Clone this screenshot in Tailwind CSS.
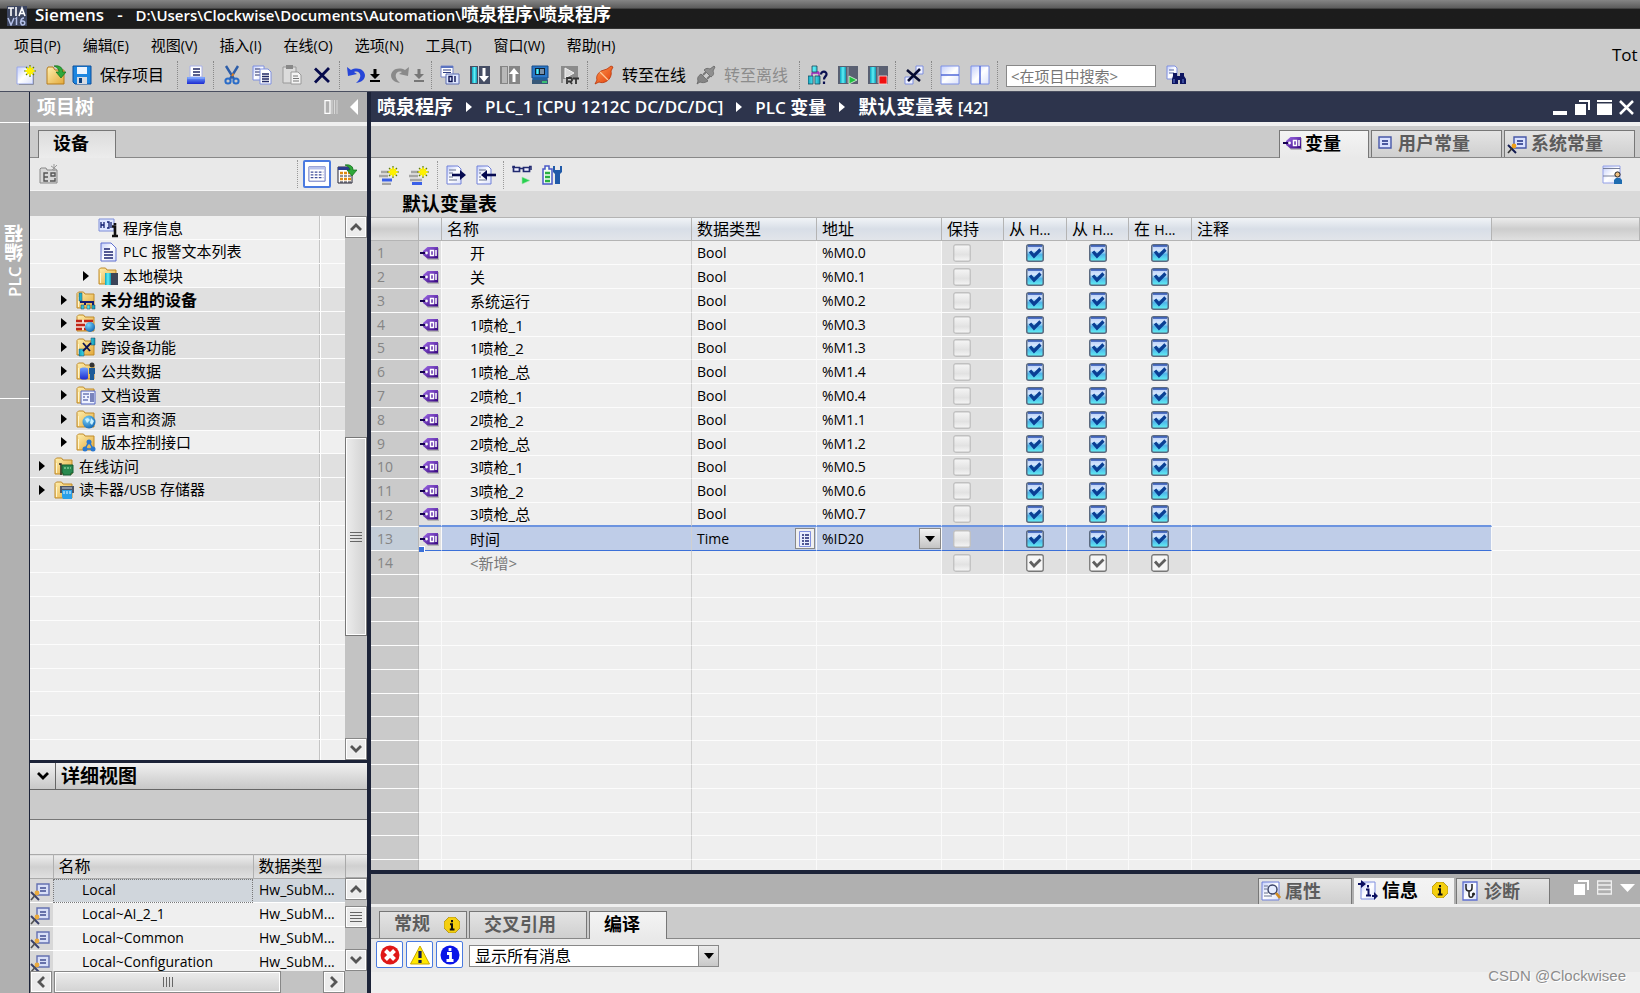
<!DOCTYPE html>
<html lang="zh-CN">
<head>
<meta charset="utf-8">
<meta name="viewport" content="width=device-width, initial-scale=1">
<title>Siemens - 喷泉程序</title>
<script src="https://cdn.jsdelivr.net/npm/@tailwindcss/browser@4"></script>
</head>
<body class="flex h-screen flex-col overflow-hidden bg-[#cbcbcb] font-['Open_Sans','Noto_Sans_CJK_SC',sans-serif] text-sm text-black">

<!-- Icon library -->
<svg class="absolute h-0 w-0" aria-hidden="true">
  <defs>
    <linearGradient id="gTag" x1="0" y1="0" x2="1" y2="1"><stop offset="0" stop-color="#a06be8"/><stop offset="1" stop-color="#35047f"/></linearGradient>
    <linearGradient id="gFold" x1="0" y1="0" x2="1" y2="1"><stop offset="0" stop-color="#fff0b0"/><stop offset="1" stop-color="#e3a93a"/></linearGradient>
    <linearGradient id="gPage" x1="0" y1="0" x2="1" y2="1"><stop offset="0" stop-color="#c3cefa"/><stop offset=".5" stop-color="#ffffff"/><stop offset="1" stop-color="#dbe2fb"/></linearGradient>
    <linearGradient id="gBlue" x1="0" y1="0" x2="0" y2="1"><stop offset="0" stop-color="#6fa0ff"/><stop offset="1" stop-color="#1d2ad0"/></linearGradient>
    <linearGradient id="gCyan" x1="0" y1="0" x2="1" y2="0"><stop offset="0" stop-color="#0ea3c0"/><stop offset=".5" stop-color="#5ff0f6"/><stop offset="1" stop-color="#0d97b5"/></linearGradient>
    <linearGradient id="gChk" x1="0" y1="0" x2="0" y2="1"><stop offset="0" stop-color="#b4caf6"/><stop offset=".35" stop-color="#d5e6fd"/><stop offset=".6" stop-color="#4fb4ea"/><stop offset="1" stop-color="#62f4f4"/></linearGradient>
    <linearGradient id="gOff" x1="0" y1="0" x2="0" y2="1"><stop offset="0" stop-color="#f6f6f6"/><stop offset=".6" stop-color="#e2e2e2"/><stop offset="1" stop-color="#f6f6f6"/></linearGradient>
    <linearGradient id="gOr" x1="0" y1="0" x2="1" y2="1"><stop offset="0" stop-color="#ff9a50"/><stop offset="1" stop-color="#e03a08"/></linearGradient>
    <radialGradient id="gBall" cx=".35" cy=".3" r=".8"><stop offset="0" stop-color="#7ad4fa"/><stop offset="1" stop-color="#0b5fb0"/></radialGradient>
  </defs>
  <symbol id="spark" viewBox="0 0 12 12"><path d="M6 0v12M0 6h12M2 2l8 8M10 2l-8 8" stroke="#5c7a10" stroke-width="1.200"/><path d="M6 1.500v9M1.500 6h9M3 3l6 6M9 3l-6 6" stroke="#fff200" stroke-width="1.800"/></symbol>
  <symbol id="folder" viewBox="0 0 20 20"><path d="M1 18V3.500L2.500 2h5L9 4h9v14z" fill="url(#gFold)" stroke="#c08a28"/><path d="M2.500 17V7" stroke="#fff6cf"/></symbol>
  <symbol id="new" viewBox="0 0 20 20"><path d="M1 2h11l5 5v12H1z" fill="url(#gPage)" stroke="#9aa8e8"/><path d="M17.500 8v11.500H3" fill="none" stroke="#8a8fa0"/><use href="#spark" x="8" y="0" width="12" height="12"/></symbol>
  <symbol id="open" viewBox="0 0 20 20"><path d="M1 19V4l1-2h5l2 3h9v14z" fill="url(#gFold)" stroke="#b57d1e"/><path d="M8 1c6-1 9 2 8.500 6H20l-5 6-5-6h3C13 4 11 2 8 1z" fill="#2fa83a" stroke="#107018" stroke-width=".7"/></symbol>
  <symbol id="save" viewBox="0 0 20 20"><path d="M1 1h18v18H3l-2-2z" fill="#1c86e0" stroke="#0b4f9c"/><path d="M5 2h10v7H5z" fill="#eaf4ff"/><path d="M5 12h10v7H5z" fill="#d6dbe2"/><path d="M7 13h3v5H7z" fill="#0b3f7c"/></symbol>
  <symbol id="print" viewBox="0 0 20 20"><path d="M4 1h12v11H4z" fill="#fff" stroke="#a8b0e8"/><path d="M7 4h7M7 7h7M7 10h7" stroke="#222a66" stroke-width="1.300"/><path d="M1 12h18v5l-1 2H1z" fill="url(#gBlue)"/><path d="M1.500 13h17" stroke="#93b0ff"/></symbol>
  <symbol id="cut" viewBox="0 0 20 20"><path d="M4 1l8 13M16 1L8 14" stroke="#2d5da8" stroke-width="2.400"/><path d="M10 11l1.500-2.500" stroke="#e08020" stroke-width="2"/><circle cx="6" cy="16" r="2.600" fill="none" stroke="#2a6cc8" stroke-width="2"/><circle cx="14" cy="16" r="2.600" fill="none" stroke="#2a6cc8" stroke-width="2"/></symbol>
  <symbol id="copy" viewBox="0 0 20 20"><path d="M1 1h11v14H1z" fill="url(#gPage)" stroke="#7f8fe0"/><path d="M3 4h5M3 7h5M3 10h5" stroke="#222a66"/><path d="M8 4h8l3 3v12H8z" fill="#fff" stroke="#7f8fe0"/><path d="M10 9h7M10 11.500h7M10 14h7M10 16.500h7" stroke="#222a66" stroke-width="1.300"/></symbol>
  <symbol id="paste" viewBox="0 0 20 20"><path d="M1 2h13v16H1z" fill="#dcdcdc" stroke="#999"/><path d="M4 0h7v4H4z" fill="#888"/><path d="M9 7h7l3 3v9H9z" fill="#f4f4f4" stroke="#999"/><path d="M11 11h5M11 13.500h6M11 16h6" stroke="#777"/></symbol>
  <symbol id="del" viewBox="0 0 20 20"><path d="M3 3.500L17 17M17 3L3 17.500" stroke="#060a4c" stroke-width="2.800"/></symbol>
  <symbol id="undo" viewBox="0 0 20 20"><path d="M1 2l1 9 9-2-3-2c5-2 9 3 4 9l-2 2c9-1 11-8 7-12-3-3-8-3-12-1z" fill="#2746d8"/></symbol>
  <symbol id="redo" viewBox="0 0 20 20"><path d="M19 2l-1 9-9-2 3-2c-5-2-9 3-4 9l2 2C1 17-1 10 3 6c3-3 8-3 12-1z" fill="#8a8a8a"/></symbol>
  <symbol id="down" viewBox="0 0 10 20"><path d="M3.500 4h3v5H10l-5 5-5-5h3.500zM0 15h10v2H0z"/></symbol>
  <symbol id="compile" viewBox="0 0 20 20"><path d="M1 1h12v11H1z" fill="#fff" stroke="#7484c8"/><path d="M1 1h12v2H1z" fill="#5b74c0"/><path d="M3 5h8M3 7.500h8" stroke="#2c3c80"/><path d="M6 9h13v10H6z" fill="#dfe8ff" stroke="#5c6cb0"/><path d="M9 11.500h3v5H9zM15 11v6" fill="none" stroke="#0a1050" stroke-width="1.400"/></symbol>
  <symbol id="dl" viewBox="0 0 20 20"><path d="M0 1h20v18H0z" fill="#454d63"/><path d="M2 2h5v16H2z" fill="url(#gCyan)"/><path d="M8.500 1v18" stroke="#c8ccd8"/><path d="M12.500 3h3v8H19l-5 6-5-6h3.500z" fill="#fff"/></symbol>
  <symbol id="ul" viewBox="0 0 20 20"><path d="M0 1h20v18H0z" fill="#858585"/><path d="M2 2h5v16H2z" fill="#b8b8b8"/><path d="M8.500 1v18" stroke="#d0d0d0"/><path d="M12.500 17h3V9H19l-5-6-5 6h3.500z" fill="#fff"/></symbol>
  <symbol id="sim" viewBox="0 0 20 20"><path d="M2 1h16v12H2z" fill="#2a78c8" stroke="#164a88"/><path d="M5 3h10v7H5z" fill="#123"/><path d="M6 4h3v5H6z" fill="url(#gCyan)"/><path d="M10 4h4v5h-4z" fill="#7890a8"/><path d="M3 13h14l1 2H2z" fill="#1f5f9c"/><path d="M2 15h16v4H2z" fill="#385878"/><path d="M12 17h5" stroke="#3be070" stroke-width="1.500"/></symbol>
  <symbol id="rt" viewBox="0 0 20 20"><path d="M1 1h17v13H1z" fill="#8b8b8b"/><path d="M5 3l9 5-9 5z" fill="#d8d8d8" stroke="#f0f0f0"/><path d="M2 14v4" stroke="#555"/><path d="M7 19v-6h4l1 1v1.500l-1 1H8M10 16l2 3M13 13.500h6M16 13v6" fill="none" stroke="#333" stroke-width="1.800"/></symbol>
  <symbol id="plug" viewBox="0 0 20 20"><path d="M1 19l2-4c-1-3 0-6 4-9l6-2 4-3 2 1-2 4c1 4-1 8-4 10-3 2-6 2-8 1z" fill="url(#gOr)" stroke="#b83408" stroke-width=".8"/><path d="M6 7l8 8" stroke="#ffc898" stroke-width="1.300"/></symbol>
  <symbol id="unplug" viewBox="0 0 20 20"><path d="M1 19l1-3c-1-3 0-5 3-7l7 7c-3 2-6 2-8 1z" fill="#858585" stroke="#666" stroke-width=".8"/><path d="M8 5c2-2 4-2 6-1l4-3 1 1-2 4c1 2 1 4-2 6z" fill="#8f8f8f" stroke="#666" stroke-width=".8"/><path d="M7 10l3-3M11 14l3-3" stroke="#777" stroke-width="1.800"/></symbol>
  <symbol id="nodes" viewBox="0 0 20 20"><path d="M4 12V8h6V6M4 8h7v4" fill="none" stroke="#a020c0" stroke-width="1.300"/><path d="M4 1h5v6H4zM0 11h5v8H0zM7 11h5v8H7z" fill="url(#gCyan)" stroke="#1a4a5a" stroke-width=".8"/><path d="M13 9.500c0-4 6-3.500 5.500 0-.3 2-2.500 2-2.500 5M16 16.500v2.500" fill="none" stroke="#0a1050" stroke-width="2.200"/></symbol>
  <symbol id="run" viewBox="0 0 20 20"><path d="M0 1h20v18H0z" fill="#5a6072"/><path d="M2 2h6v16H2z" fill="url(#gCyan)"/><path d="M10 2v16" stroke="#a8adba"/><path d="M11 11v8l8-4z" fill="#1fc040" stroke="#e6ffe6" stroke-width=".8"/></symbol>
  <symbol id="stop" viewBox="0 0 20 20"><path d="M0 1h20v18H0z" fill="#5a6072"/><path d="M2 2h6v16H2z" fill="url(#gCyan)"/><path d="M10 2v16" stroke="#a8adba"/><path d="M11 11h8v8h-8z" fill="#f01010" stroke="#ffe0e0" stroke-width=".8"/></symbol>
  <symbol id="xref" viewBox="0 0 20 20"><path d="M12 1h7v8h-7zM1 12h8v7H1z" fill="#eef1ff" stroke="#7f8fe0"/><path d="M3 5l13 11M16 4L4 16" stroke="#060a30" stroke-width="2.600"/></symbol>
  <symbol id="splith" viewBox="0 0 20 20"><path d="M1 1h18v18H1z" fill="url(#gPage)" stroke="#7f92e8"/><path d="M1 10h18" stroke="#5068d8" stroke-width="1.500"/></symbol>
  <symbol id="splitv" viewBox="0 0 20 20"><path d="M1 1h18v18H1z" fill="url(#gPage)" stroke="#7f92e8"/><path d="M10 1v18" stroke="#5068d8" stroke-width="1.500"/></symbol>
  <symbol id="find" viewBox="0 0 20 20"><path d="M1 1h8l2 2v11H1z" fill="url(#gPage)" stroke="#7f8fe0"/><path d="M3 5h5M3 8h5" stroke="#5060a0"/><path d="M7 8h4v3h3V8h4v3l2 3v5h-6v-4h-2v4H6v-5l1-3z" fill="#0d1560"/><path d="M8 14v4M17 14v4" stroke="#6c84d8"/></symbol>
  <symbol id="newdev" viewBox="0 0 20 20"><path d="M1 19V5l1-1h5l1 2h10v13z" fill="#d8d8d8" stroke="#888"/><path d="M9 9H5v8h4M5 13h4M12 9h4v3h-4zM11 17h5v-3" fill="none" stroke="#555" stroke-width="1.400"/><path d="M15 0v7M12 2l6 4M18 1l-5 5" stroke="#999"/></symbol>
  <symbol id="list" viewBox="0 0 20 20"><path d="M1 2h18v16H1z" fill="#fff" stroke="#5564b8"/><path d="M1 2h18v3H1z" fill="#b8c2ec"/><path d="M3 8h14M3 11h14M3 14h14" stroke="#40509c" stroke-width="1.300" stroke-dasharray="3 1.500"/></symbol>
  <symbol id="grid2" viewBox="0 0 20 20"><path d="M1 3h14v16H1z" fill="#fff" stroke="#223"/><path d="M1 3h14v3H1z" fill="#2c3c90"/><path d="M3 9h11M3 15h11" stroke="#e08a10" stroke-width="2.600" stroke-dasharray="3 1"/><path d="M3 12h11M3 18h11" stroke="#223" stroke-dasharray="3 1"/><path d="M8 1c6-1 8 2 8 5h4l-5 6-5-6h3C13 4 11 2 8 1z" fill="#2fa83a" stroke="#107018" stroke-width=".7"/></symbol>
  <symbol id="rowadd" viewBox="0 0 20 20"><path d="M2 7h10M0 11h9M3 19h9" stroke="#a5a5a5" stroke-width="2.500"/><path d="M3 15h10" stroke="#3a60e8" stroke-width="3"/><use href="#spark" x="8" y="1" width="12" height="12"/></symbol>
  <symbol id="rowadd2" viewBox="0 0 20 20"><path d="M2 7h10M0 11h9M1 15h12" stroke="#a5a5a5" stroke-width="2.500"/><path d="M3 18.500h10" stroke="#3a60e8" stroke-width="3"/><use href="#spark" x="8" y="1" width="12" height="12"/></symbol>
  <symbol id="export" viewBox="0 0 20 20"><path d="M1 1h11l3 3v15H1z" fill="url(#gPage)" stroke="#7080d8"/><path d="M3 5h7M3 8h4M3 12h4M3 15h8" stroke="#66708c"/><path d="M6 10h10" stroke="#060a50" stroke-width="2.600"/><path d="M14 5l6 5-6 5z" fill="#060a50"/></symbol>
  <symbol id="import" viewBox="0 0 20 20"><path d="M1 1h11l3 3v15H1z" fill="url(#gPage)" stroke="#7080d8"/><path d="M3 5h7M3 8h2M3 12h2M3 15h8" stroke="#66708c"/><path d="M9 10h11" stroke="#060a50" stroke-width="2.600"/><path d="M11 5l-6 5 6 5z" fill="#060a50"/></symbol>
  <symbol id="watch" viewBox="0 0 20 20"><path d="M1 3V1.500h2M19 5V1.500h-2M8 3.500h4" fill="none" stroke="#222a70" stroke-width="1.500"/><path d="M1.500 2.500h6v4h-6zM11.500 2.500h6v4h-6z" fill="#eef" stroke="#222a70" stroke-width="1.700"/><path d="M10 12v7l8-3.500z" fill="#28d050" stroke="#a8e8b0" stroke-width=".6"/></symbol>
  <symbol id="batt" viewBox="0 0 20 20"><path d="M1 4h2V1h4v3h3v15H1z" fill="#f2fff2" stroke="#4a58c8" stroke-width="1.500"/><path d="M3 8h5M3 12h5M3 16h5" stroke="#28b040" stroke-width="2.500"/><path d="M11 1v6l2 2v10h5V9l2-2V1h-2v4h-5V1z" fill="#205aa8"/></symbol>
  <symbol id="userview" viewBox="0 0 20 20"><path d="M1 1h17v17H1z" fill="url(#gPage)" stroke="#93a0e8"/><path d="M1 3.500h17M1 11h12" stroke="#777f98"/><circle cx="15.500" cy="9.500" r="2.600" fill="#f0c080" stroke="#222"/><path d="M12 19v-4l2-2h4l2 2v4z" fill="#1e6cb0"/></symbol>
  <symbol id="tag" viewBox="0 0 20 14"><path d="M8 2h11v12H8L4 9z" fill="#8a8a8a" opacity=".5"/><path d="M7.500 1H18v11.500H7.500L3 9V5z" fill="url(#gTag)"/><path d="M0 7h6" stroke="#150050" stroke-width="2"/><circle cx="6.500" cy="7" r="1.400" fill="#fff"/><path d="M10.500 4.500h3v5h-3zM16 4v6" fill="none" stroke="#fff" stroke-width="1.500"/></symbol>
  <symbol id="const" viewBox="0 0 14 14"><path d="M1 1h12v11H1z" fill="#d9e1ff" stroke="#4858a8" stroke-width="1.400"/><path d="M4 5h6M4 8h6" stroke="#1c2c80" stroke-width="1.500"/></symbol>
  <symbol id="sysconst" viewBox="0 0 20 18"><path d="M7 1h12v11H7z" fill="#d9e1ff" stroke="#4858a8" stroke-width="1.400"/><path d="M10 5h6M10 8h6" stroke="#1c2c80" stroke-width="1.500"/><path d="M1 9l8 8" stroke="#111a50" stroke-width="2"/><path d="M1 17l7-8" stroke="#333" stroke-width="1.600"/><circle cx="7" cy="10" r="2.400" fill="#f0a018"/></symbol>
  <symbol id="proginfo" viewBox="0 0 20 20"><path d="M1 1h15v12H1z" fill="#dfe8ff" stroke="#7c8cd8"/><path d="M3 4v6M3 7h3M6 4v6M9 4h2v6H9M13 4v6" fill="none" stroke="#122070" stroke-width="1.300"/><path d="M14 8.500h3v9M17 5v2M14 18h6" fill="none" stroke="#111" stroke-width="2.600"/></symbol>
  <symbol id="doc" viewBox="0 0 20 20"><path d="M3 1h10l5 5v13H3z" fill="url(#gPage)" stroke="#6070d0"/><path d="M6 7h6M6 10h9M6 13h9M6 16h9" stroke="#1c2470" stroke-width="1.500"/></symbol>
  <symbol id="fmod" viewBox="0 0 20 20"><use href="#folder"/><path d="M7 7h6v12H7z" fill="url(#gCyan)"/><path d="M13 7h7v12h-7z" fill="#3c4458"/></symbol>
  <symbol id="fnet" viewBox="0 0 20 20"><use href="#folder"/><path d="M3 3h3v8H3zM5 15h3v4H5zM11 15h3v4h-3zM16 15h3v4h-3z" fill="url(#gCyan)" stroke="#246" stroke-width=".5"/><path d="M4 12h14M17 12v3M9 12v3" stroke="#151c70" stroke-width="2"/></symbol>
  <symbol id="fsec" viewBox="0 0 20 20"><use href="#folder"/><path d="M0 7h17v10H0z" fill="#f4e0d8"/><path d="M0 8h6M8 8h9M0 12h9M11 12h5M0 16h6M8 16h5" stroke="#c02418" stroke-width="2.500"/><circle cx="14" cy="14" r="5" fill="url(#gBall)"/></symbol>
  <symbol id="fx" viewBox="0 0 20 20"><use href="#folder"/><path d="M15 1h4v7h-4zM3 12h5v7H3z" fill="url(#gCyan)" stroke="#246" stroke-width=".5"/><path d="M7 6l7 8M15 6l-8 8" stroke="#0a1050" stroke-width="1.800"/></symbol>
  <symbol id="fdata" viewBox="0 0 20 20"><use href="#folder"/><path d="M4 8c0-2 8-2 8 0v9c0 2-8 2-8 0z" fill="url(#gBlue)"/><circle cx="16" cy="4" r="2.500" fill="#333"/><path d="M13 7h6v6h-1v6h-4v-6h-1z" fill="#1c5a98"/></symbol>
  <symbol id="fdoc" viewBox="0 0 20 20"><use href="#folder"/><path d="M5 6h14v13H5z" fill="#eef2ff" stroke="#5062c0"/><path d="M7 9h6M7 12h2M7 15h5M11 12h2M15 8v9M17 8v9" stroke="#2c3c90" stroke-width="1.200"/></symbol>
  <symbol id="flang" viewBox="0 0 20 20"><use href="#folder"/><circle cx="13" cy="13" r="6.500" fill="url(#gBall)"/><path d="M9 10l3-1 2 2-3 3zM15 9l3 3-2 4-2-2z" fill="#c8f0ff"/></symbol>
  <symbol id="fver" viewBox="0 0 20 20"><use href="#folder"/><path d="M13 9.500L9 17h8z" fill="none" stroke="#2a78d0" stroke-width="1.500"/><circle cx="13" cy="10" r="2.500" fill="#2a78d0"/><circle cx="9" cy="17" r="2.500" fill="#2a78d0"/><circle cx="17" cy="17" r="2.500" fill="#2a78d0"/></symbol>
  <symbol id="fonl" viewBox="0 0 20 20"><use href="#folder"/><path d="M5 8h2v11" fill="none" stroke="#222" stroke-width="1.500"/><path d="M8 9h11v8h-2v2H9v-2H8z" fill="#2a8a50" stroke="#145a30"/><path d="M10 12h7" stroke="#a8e8b8" stroke-dasharray="2 1"/></symbol>
  <symbol id="fusb" viewBox="0 0 20 20"><use href="#folder"/><path d="M6 6h14v7H6z" fill="#4a5468"/><path d="M8 8h10" stroke="#c8d0e0"/><path d="M8 10h10v9H9l-1-2z" fill="#2aa0e8"/><path d="M10 11v3M13 11v3M16 11v3" stroke="#e8f6ff"/></symbol>
  <symbol id="info" viewBox="0 0 16 16"><path d="M5 0h6l5 5v6l-5 5H5l-5-5V5z" fill="#f4cf10" stroke="#a88a10" stroke-width=".8"/><path d="M8 3v2.200M6 7.200h2v5M5.800 12.500h4.700" fill="none" stroke="#111" stroke-width="2"/></symbol>
  <symbol id="props" viewBox="0 0 20 20"><path d="M1 1h17v18H1z" fill="url(#gPage)" stroke="#7080d8"/><path d="M3 5h4M3 8h3M3 12h4M3 15h8" stroke="#66708c"/><circle cx="11.500" cy="8.500" r="4.500" fill="#e6edff" stroke="#3c4468" stroke-width="1.500"/><path d="M15 12l4 5" stroke="#d08a20" stroke-width="2.800"/></symbol>
  <symbol id="infopage" viewBox="0 0 20 20"><path d="M3 2h14v17H3z" fill="url(#gPage)" stroke="#8090e0"/><path d="M0 3h3V0l5 4-5 4V5H0zM14 15h2v-3l4 4-4 4v-3h-2z" fill="#0a0f60"/><path d="M10 5v2.500M8 9.500h2.500v5.500M8 15.500h5" fill="none" stroke="#0a0f60" stroke-width="2"/></symbol>
  <symbol id="diag" viewBox="0 0 16 20"><path d="M1 1h14v18H1z" fill="url(#gPage)" stroke="#6070d0" stroke-width="1.300"/><path d="M4 3v4c0 4 6 4 6 0V3M7 10v4c0 3 4 3 4 0" fill="none" stroke="#222" stroke-width="1.500"/><circle cx="11.500" cy="13" r="1.600" fill="#222"/></symbol>
  <symbol id="restore" viewBox="0 0 15 15"><path d="M4 0h11v10h-2V2H4zM0 4h11v11H0z"/></symbol>
  <symbol id="up" viewBox="0 0 14 14"><path d="M2 10l5-5 5 5" fill="none" stroke="#555" stroke-width="2.800"/></symbol>
  <symbol id="dn" viewBox="0 0 14 14"><path d="M2 4l5 5 5-5" fill="none" stroke="currentColor" stroke-width="2.800"/></symbol>
</svg>

<!-- Window title -->
<header class="flex h-[29px] shrink-0 items-center border-b border-[#333] bg-[#1c1c1c] bg-linear-to-b from-[#858585] from-0% via-[#5a5a5a] via-30% to-[#1c1c1c] to-31% pl-[7px] text-[17px]/6 font-semibold whitespace-pre text-white">
  <svg class="mt-1 size-5" viewBox="0 0 20 20" aria-label="TIA V16"><path d="M0 0h20v20H0z" fill="#3c4560"/><path d="M1 2h6M4 2v8M9 1v9M12 10l3-8 3 8M13 7.500h4" fill="none" stroke="#fff" stroke-width="1.600"/><path d="M1 12l3 7 3-7M9.500 19v-7l-1 1M17 12c-4 0-4 7-1.500 7 3 0 3-4 0-4-1 0-2 1-2 2" fill="none" stroke="#b4c0e8" stroke-width="1.500"/></svg>
  <h1 class="ml-2">Siemens   -  <span class="text-[15px]/6"> D:\Users\Clockwise\Documents\Automation\<span class="text-lg/6">喷泉程序</span>\<span class="text-lg/6">喷泉程序</span></span></h1>
</header>

<!-- Menu and toolbar -->
<div class="flex h-[63px] shrink-0 border-b border-[#4a4f60] bg-[#cbcbcb]">
  <div class="min-w-0 flex-1">
    <nav class="flex h-[30px] items-center gap-[22px] pt-1 pl-[14px] text-[15px]">
      <button type="button">项目<span class="text-sm">(P)</span></button>
      <button type="button">编辑<span class="text-sm">(E)</span></button>
      <button type="button">视图<span class="text-sm">(V)</span></button>
      <button type="button">插入<span class="text-sm">(I)</span></button>
      <button type="button">在线<span class="text-sm">(O)</span></button>
      <button type="button">选项<span class="text-sm">(N)</span></button>
      <button type="button">工具<span class="text-sm">(T)</span></button>
      <button type="button">窗口<span class="text-sm">(W)</span></button>
      <button type="button">帮助<span class="text-sm">(H)</span></button>
    </nav>
    <div class="flex h-8 items-center gap-2.5 pl-4 text-base whitespace-nowrap">
      <button type="button" aria-label="新建"><svg class="size-5"><use href="#new"/></svg></button>
      <button type="button" aria-label="打开"><svg class="size-5"><use href="#open"/></svg></button>
      <button type="button" class="-ml-1 flex items-center gap-2 pr-1.5"><svg class="size-5"><use href="#save"/></svg>保存项目</button>
      <i class="-mr-0.5 -ml-[3px] h-7 border-l border-dotted border-[#888]"></i>
      <button type="button" aria-label="打印"><svg class="size-5"><use href="#print"/></svg></button>
      <i class="-mr-0.5 -ml-[3px] h-7 border-l border-dotted border-[#888]"></i>
      <button type="button" aria-label="剪切"><svg class="size-5"><use href="#cut"/></svg></button>
      <button type="button" aria-label="复制"><svg class="size-5"><use href="#copy"/></svg></button>
      <button type="button" aria-label="粘贴"><svg class="size-5"><use href="#paste"/></svg></button>
      <button type="button" aria-label="删除"><svg class="size-5"><use href="#del"/></svg></button>
      <i class="-mr-1 -ml-[3px] h-7 border-l border-dotted border-[#888]"></i>
      <button type="button" aria-label="撤销" class="flex gap-1"><svg class="size-5"><use href="#undo"/></svg><svg class="h-5 w-2.5"><use href="#down"/></svg></button>
      <button type="button" aria-label="重做" class="flex gap-1"><svg class="size-5"><use href="#redo"/></svg><svg class="h-5 w-2.5 fill-[#777]"><use href="#down"/></svg></button>
      <i class="-mr-0.5 -ml-[3px] h-7 border-l border-dotted border-[#888]"></i>
      <button type="button" aria-label="编译"><svg class="size-5"><use href="#compile"/></svg></button>
      <button type="button" aria-label="下载"><svg class="size-5"><use href="#dl"/></svg></button>
      <button type="button" aria-label="上传"><svg class="size-5"><use href="#ul"/></svg></button>
      <button type="button" aria-label="仿真"><svg class="size-5"><use href="#sim"/></svg></button>
      <button type="button" aria-label="运行系统"><svg class="size-5"><use href="#rt"/></svg></button>
      <i class="-mr-1 -ml-[3px] h-7 border-l border-dotted border-[#888]"></i>
      <button type="button" class="flex items-center gap-2"><svg class="size-5"><use href="#plug"/></svg>转至在线</button>
      <button type="button" class="flex items-center gap-2 pr-1 text-[#8c8c8c]"><svg class="size-5"><use href="#unplug"/></svg>转至离线</button>
      <i class="-mr-0.5 -ml-[3px] h-7 border-l border-dotted border-[#888]"></i>
      <button type="button" aria-label="可访问设备"><svg class="size-5"><use href="#nodes"/></svg></button>
      <button type="button" aria-label="启动 CPU"><svg class="size-5"><use href="#run"/></svg></button>
      <button type="button" aria-label="停止 CPU"><svg class="size-5"><use href="#stop"/></svg></button>
      <i class="-mr-0.5 -ml-[3px] h-7 border-l border-dotted border-[#888]"></i>
      <button type="button" aria-label="交叉引用"><svg class="size-5"><use href="#xref"/></svg></button>
      <i class="-mr-0.5 -ml-[3px] h-7 border-l border-dotted border-[#888]"></i>
      <button type="button" aria-label="水平拆分"><svg class="size-5"><use href="#splith"/></svg></button>
      <button type="button" aria-label="垂直拆分"><svg class="size-5"><use href="#splitv"/></svg></button>
      <i class="-mr-0.5 -ml-[3px] h-7 border-l border-dotted border-[#888]"></i>
      <input type="text" aria-label="在项目中搜索" placeholder="&lt;在项目中搜索&gt;" class="mt-0.5 h-[22px] w-[150px] border border-[#888] bg-white px-1 text-[15px] placeholder:text-[#777]">
      <button type="button" aria-label="查找"><svg class="size-5"><use href="#find"/></svg></button>
    </div>
  </div>
  <div class="w-7 shrink-0 pt-3.5 text-[17px]/6 font-medium">Tot</div>
</div>

<div class="flex min-h-0 flex-1">
  <!-- Side strip -->
  <aside class="flex w-[30px] shrink-0 flex-col border-r border-[#1c2338] bg-[#b0b0b0]">
    <div class="h-[31px] border-b border-white"></div>
    <button type="button" class="flex h-[276px] items-center justify-center border-b border-white text-[17px]/6 font-semibold text-white"><span class="rotate-180 [writing-mode:vertical-rl]">PLC <span class="text-[19px]/6">编程</span></span></button>
  </aside>

  <!-- Project tree -->
  <section class="flex w-[337px] shrink-0 flex-col">
    <div class="flex h-[34px] shrink-0 items-center border-b-4 border-[#f0f0f0] bg-[#b0b0b0] pr-[9px] pl-[7px] text-white">
      <h2 class="flex-1 text-[19px]/6 font-bold">项目树</h2>
      <svg class="mr-3 h-3.5 w-3.5" viewBox="0 0 14 14"><path d="M1 .5h5v13H1z" fill="none" stroke="#fff" stroke-width="1.300"/><path d="M8 0v14M10.500 0v14M13 0v14" stroke="#d8d8d8"/></svg>
      <svg class="h-4 w-2 fill-white" viewBox="0 0 8 16"><path d="M8 0v16L0 8z"/></svg>
    </div>
    <div class="flex h-8 shrink-0 items-end border-b border-[#888] bg-[#cbcbcb] pl-2">
      <button type="button" class="-mb-px h-7 w-[78px] border border-b-0 border-[#777] bg-linear-to-b from-[#dcdcdc] to-[#ececec] pr-3 pb-1 text-lg/6 font-bold">设备</button>
    </div>
    <div class="flex h-8 shrink-0 items-center bg-[#e9e9e9] pr-[10px] pl-[9px]">
      <button type="button" aria-label="添加新设备" class="mr-auto"><svg class="size-5"><use href="#newdev"/></svg></button>
      <i class="mr-[5px] h-7 border-l border-dotted border-[#999]"></i>
      <button type="button" aria-label="列表视图" class="mr-1.5 grid size-7 place-items-center rounded-xs border-2 border-[#4a7ae0] bg-white"><svg class="size-[18px]"><use href="#list"/></svg></button>
      <button type="button" aria-label="显示详细"><svg class="size-5"><use href="#grid2"/></svg></button>
    </div>
    <div class="h-[26px] shrink-0 border-t border-[#f4f4f4] bg-[#c3c3c3]"></div>
    <div class="flex min-h-0 flex-1">
      <ul id="tree" class="min-w-0 flex-1 overflow-hidden bg-[#efefef] text-[15px] whitespace-nowrap"></ul>
      <div class="flex w-[22px] shrink-0 flex-col bg-[#c3c3c3]">
        <button type="button" aria-label="向上滚动" class="grid h-[22px] place-items-center border border-[#888] bg-[#ececec] inset-ring inset-ring-white"><svg class="size-3.5"><use href="#up"/></svg></button>
        <div class="grow-[200] basis-0"></div>
        <div class="grid grow-[198] basis-0 place-items-center border border-[#777] bg-linear-to-r from-[#ececec] to-[#d2d2d2] inset-ring inset-ring-white"><svg class="h-2.5 w-3" viewBox="0 0 12 10"><path d="M0 .5h12M0 3.500h12M0 6.500h12M0 9.500h12" stroke="#666"/></svg></div>
        <div class="grow-[102] basis-0"></div>
        <button type="button" aria-label="向下滚动" class="grid h-[22px] place-items-center border border-[#888] bg-[#ececec] text-[#555] inset-ring inset-ring-white"><svg class="size-3.5"><use href="#dn"/></svg></button>
      </div>
    </div>

    <!-- Details view -->
    <div class="shrink-0 border-t-3 border-[#1c2338]">
      <div class="flex h-[27px] items-center border-b border-[#666] bg-linear-to-b from-[#f0f0f0] to-[#c8c8c8]">
        <button type="button" aria-label="折叠" class="grid h-full w-[26px] place-items-center border-r border-[#666]"><svg class="size-3.5"><use href="#dn"/></svg></button>
        <h2 class="pl-[5px] text-[19px]/6 font-bold">详细视图</h2>
      </div>
      <div class="h-[30px] border-b border-[#777] bg-[#cbcbcb]"></div>
      <div class="h-[34px] bg-[#e9e9e9]"></div>
      <div class="flex h-[117px] overflow-hidden">
        <table class="min-w-0 flex-1 table-fixed border-collapse text-left">
          <colgroup><col class="w-[23px]"><col class="w-[200px]"><col></colgroup>
          <thead><tr class="h-6 border-y border-[#aaa] bg-linear-to-b from-[#ececec] via-[#d0d0d0] to-[#e0e0e0] text-base/5">
            <th class="p-0"></th><th class="border-l border-[#b0b0b0] p-0 pb-0.5 pl-[5px] font-normal">名称</th><th class="border-l border-[#b0b0b0] p-0 pb-0.5 pl-[5px] font-normal">数据类型</th></tr></thead>
          <tbody id="details"></tbody>
        </table>
        <div class="flex w-[22px] shrink-0 flex-col bg-[#c3c3c3]">
          <div class="h-6 border-y border-l border-[#aaa] bg-linear-to-b from-[#ececec] via-[#d0d0d0] to-[#e0e0e0]"></div>
          <button type="button" aria-label="向上滚动" class="grid h-[22px] place-items-center border border-[#888] bg-[#ececec] inset-ring inset-ring-white"><svg class="size-3.5"><use href="#up"/></svg></button>
          <div class="mt-1.5 grid h-[22px] place-items-center border border-[#888] bg-[#ececec] inset-ring inset-ring-white"><svg class="h-2.5 w-3" viewBox="0 0 12 10"><path d="M0 .5h12M0 3.500h12M0 6.500h12M0 9.500h12" stroke="#666"/></svg></div>
          <button type="button" aria-label="向下滚动" class="mt-auto grid h-[22px] place-items-center border border-[#888] bg-[#ececec] text-[#555] inset-ring inset-ring-white"><svg class="size-3.5"><use href="#dn"/></svg></button>
        </div>
      </div>
      <div class="flex h-[22px] bg-[#c3c3c3]">
        <button type="button" aria-label="向左滚动" class="grid w-[22px] place-items-center border border-[#888] bg-[#ececec] text-[#555] inset-ring inset-ring-white"><svg class="size-3.5 rotate-90"><use href="#dn"/></svg></button>
        <div class="ml-0.5 grid w-[227px] place-items-center border border-[#888] bg-linear-to-b from-[#ececec] to-[#d2d2d2] inset-ring inset-ring-white"><svg class="h-2.5 w-2.5" viewBox="0 0 10 10"><path d="M.5 0v10M3.500 0v10M6.500 0v10M9.500 0v10" stroke="#666"/></svg></div>
        <button type="button" aria-label="向右滚动" class="mr-[22px] ml-auto grid w-[22px] place-items-center border border-[#888] bg-[#ececec] text-[#555] inset-ring inset-ring-white"><svg class="size-3.5 -rotate-90"><use href="#dn"/></svg></button>
      </div>
    </div>
  </section>

  <div class="w-1 shrink-0 bg-[#1c2338]"></div>

  <!-- Editor -->
  <main class="flex min-w-0 flex-1 flex-col">
    <div class="flex h-[34px] shrink-0 items-center border-b-4 border-[#f0f0f0] bg-[#2d344c] pr-[6px] pl-[6px] text-[17px]/6 font-semibold whitespace-nowrap text-white">
      <nav class="flex flex-1 items-center gap-[13px]">
        <a href="#" class="text-[19px]/6 font-bold">喷泉程序</a>
        <svg class="h-2.5 w-1.5 fill-white" viewBox="0 0 6 10"><path d="M0 0l6 5-6 5z"/></svg>
        <a href="#">PLC_1 [CPU 1212C DC/DC/DC]</a>
        <svg class="h-2.5 w-1.5 fill-white" viewBox="0 0 6 10"><path d="M0 0l6 5-6 5z"/></svg>
        <a href="#">PLC <span class="text-lg/6 font-bold">变量</span></a>
        <svg class="h-2.5 w-1.5 fill-white" viewBox="0 0 6 10"><path d="M0 0l6 5-6 5z"/></svg>
        <a href="#"><span class="text-[19px]/6 font-bold">默认变量表</span> [42]</a>
      </nav>
      <div class="flex gap-[7px]">
        <button type="button" aria-label="最小化"><svg class="size-[15px] fill-white" viewBox="0 0 15 15"><path d="M0 11h14v4H0z"/></svg></button>
        <button type="button" aria-label="还原"><svg class="size-[15px] fill-white"><use href="#restore"/></svg></button>
        <button type="button" aria-label="最大化"><svg class="size-[15px] fill-white" viewBox="0 0 15 15"><path d="M0 0h15v2H0zM0 3.500h15V15H0z"/></svg></button>
        <button type="button" aria-label="关闭"><svg class="size-[15px]" viewBox="0 0 15 15"><path d="M1 1l13 13M14 1L1 14" stroke="#fff" stroke-width="2.500"/></svg></button>
      </div>
    </div>
    <div class="flex h-8 shrink-0 items-end justify-end gap-0.5 border-b border-[#888] bg-[#cbcbcb] pr-[5px] text-lg/6 font-bold whitespace-nowrap text-[#5c5c5c]">
      <button type="button" class="-mb-px flex h-7 w-[90px] items-center gap-0.5 border border-b-0 border-[#777] bg-linear-to-b from-[#f4f4f4] to-[#e9e9e9] pb-1 pl-[3px] text-black"><svg class="h-3.5 w-5"><use href="#tag"/></svg>变量</button>
      <button type="button" class="flex h-[27px] w-[131px] items-center gap-1.5 border border-b-0 border-[#777] bg-linear-to-b from-[#e4e4e4] to-[#cfcfcf] pb-0.5 pl-1.5"><svg class="size-3.5"><use href="#const"/></svg>用户常量</button>
      <button type="button" class="flex h-[27px] w-[131px] items-center gap-1 border border-b-0 border-[#777] bg-linear-to-b from-[#e4e4e4] to-[#cfcfcf] pb-0.5 pl-0.5"><svg class="mt-1 h-[18px] w-5"><use href="#sysconst"/></svg>系统常量</button>
    </div>
    <div class="flex h-[33px] shrink-0 items-center gap-2.5 bg-[#e9e9e9] pr-[18px] pl-2">
      <button type="button" aria-label="插入行"><svg class="size-5"><use href="#rowadd"/></svg></button>
      <button type="button" aria-label="添加行"><svg class="size-5"><use href="#rowadd2"/></svg></button>
      <i class="-mr-0.5 -ml-0.5 h-7 border-l border-dotted border-[#999]"></i>
      <button type="button" aria-label="导出"><svg class="size-5"><use href="#export"/></svg></button>
      <button type="button" aria-label="导入"><svg class="size-5"><use href="#import"/></svg></button>
      <i class="-mr-0.5 -ml-[3px] h-7 border-l border-dotted border-[#999]"></i>
      <button type="button" aria-label="全部监视"><svg class="size-5"><use href="#watch"/></svg></button>
      <button type="button" aria-label="保持性"><svg class="size-5"><use href="#batt"/></svg></button>
      <button type="button" aria-label="用户视图" class="ml-auto"><svg class="size-5"><use href="#userview"/></svg></button>
    </div>
    <h2 class="h-[26px] shrink-0 bg-[#d9d9d9] pl-[31px] text-[19px]/[26px] font-bold">默认变量表</h2>
    <div class="min-h-0 flex-1 overflow-hidden bg-[#efefef]">
      <table class="w-full table-fixed border-separate border-spacing-0 text-left whitespace-nowrap">
        <colgroup><col class="w-12"><col class="w-[23px]"><col class="w-[250px]"><col class="w-[125px]"><col class="w-[125px]"><col class="w-[62px]"><col class="w-[63px]"><col class="w-[62px]"><col class="w-[63px]"><col class="w-[300px]"><col></colgroup>
        <thead>
          <tr class="h-6 text-base/5 *:border-y *:border-r *:border-[#b4b4b4] *:bg-linear-to-b *:p-0 *:pl-[5px] *:font-normal [&>:first-child]:from-[#ececec] [&>:first-child]:via-[#cdcdcd] [&>:first-child]:to-[#e0e0e0] [&>:last-child]:from-[#ececec] [&>:last-child]:via-[#cdcdcd] [&>:last-child]:to-[#e0e0e0] [&>:not(:first-child,:last-child)]:from-[#f1f4f7] [&>:not(:first-child,:last-child)]:via-[#d8dee7] [&>:not(:first-child,:last-child)]:to-[#e2e5ea]">
            <th></th><th></th><th>名称</th><th>数据类型</th><th>地址</th><th>保持</th>
            <th>从 <span class="text-sm/5">H...</span></th><th>从 <span class="text-sm/5">H...</span></th><th>在 <span class="text-sm/5">H...</span></th><th>注释</th>
            <th></th>
          </tr>
        </thead>
        <tbody id="vars"></tbody>
      </table>
    </div>

    <!-- Inspector -->
    <section class="shrink-0 border-t-4 border-[#1c2338]">
      <div class="flex h-[33px] items-end justify-end gap-0.5 border-b-3 border-[#efefef] bg-[#b0b0b0] pr-[5px] text-lg/6 font-bold whitespace-nowrap text-[#5c5c5c]">
        <button type="button" class="flex h-[26px] w-[94px] items-center gap-1 border border-b-0 border-[#777] bg-linear-to-b from-[#e4e4e4] to-[#cfcfcf] pb-0.5 pl-0.5"><svg class="size-5"><use href="#props"/></svg>属性</button>
        <button type="button" class="flex h-[26px] w-[100px] items-center gap-1 bg-linear-to-b from-[#f4f4f4] to-[#efefef] pb-0.5 pl-1 text-black"><svg class="size-5"><use href="#infopage"/></svg>信息<svg class="ml-2.5 size-4"><use href="#info"/></svg></button>
        <button type="button" class="mr-[22px] flex h-[26px] w-[94px] items-center gap-1.5 border border-b-0 border-[#777] bg-linear-to-b from-[#e4e4e4] to-[#cfcfcf] pb-0.5 pl-[5px]"><svg class="h-5 w-4"><use href="#diag"/></svg>诊断</button>
        <div class="flex gap-2 self-center pb-1">
          <button type="button" aria-label="还原"><svg class="size-[15px] fill-white"><use href="#restore"/></svg></button>
          <button type="button" aria-label="停靠"><svg class="size-[15px]" viewBox="0 0 15 15"><path d="M.5 1h14v13H.5zM0 5h15M0 9.500h15" fill="none" stroke="#efefef" stroke-width="1.500"/></svg></button>
          <button type="button" aria-label="折叠"><svg class="size-[15px] fill-white" viewBox="0 0 15 15"><path d="M0 4h15l-7.500 8z"/></svg></button>
        </div>
      </div>
      <div class="flex h-8 items-end gap-0.5 border-b border-[#888] bg-[#cbcbcb] pl-2 text-lg/6 font-bold whitespace-nowrap text-[#5c5c5c]">
        <button type="button" class="flex h-[27px] w-[88px] items-center border border-b-0 border-[#777] bg-linear-to-b from-[#e4e4e4] to-[#cfcfcf] pb-1 pl-3.5">常规<svg class="mt-1 ml-3.5 size-4"><use href="#info"/></svg></button>
        <button type="button" class="h-[27px] w-[118px] border border-b-0 border-[#777] bg-linear-to-b from-[#e4e4e4] to-[#cfcfcf] pb-1 pl-3.5 text-left">交叉引用</button>
        <button type="button" class="-mb-px h-7 w-[78px] border border-b-0 border-[#777] bg-linear-to-b from-[#f4f4f4] to-[#e9e9e9] pb-1.5 pl-3.5 text-left text-black">编译</button>
      </div>
      <div class="flex h-[33px] items-center gap-[3px] bg-[#e9e9e9] pb-0.5 pl-[5px]">
        <button type="button" aria-label="错误" class="grid size-[27px] place-items-center rounded-xs border border-[#4a7ae0] bg-white"><svg class="size-5" viewBox="0 0 20 20"><circle cx="10" cy="10" r="9.500" fill="#e01818"/><path d="M5.500 5.500l9 9M14.500 5.500l-9 9" stroke="#fff" stroke-width="4"/></svg></button>
        <button type="button" aria-label="警告" class="grid size-[27px] place-items-center rounded-xs border border-[#4a7ae0] bg-white"><svg class="size-5" viewBox="0 0 20 20"><path d="M10 1l9.500 18H.5z" fill="#ffe800" stroke="#c8a800"/><path d="M10 6v7M10 15v3" stroke="#111a50" stroke-width="3.200"/></svg></button>
        <button type="button" aria-label="信息" class="grid size-[27px] place-items-center rounded-xs border border-[#4a7ae0] bg-white"><svg class="size-5" viewBox="0 0 20 20"><circle cx="10" cy="10" r="9.500" fill="#0a14e8"/><path d="M10 3v3M7 8.500h3.500V15M6.500 15.500h7" fill="none" stroke="#fff" stroke-width="2.800"/></svg></button>
        <div class="mt-0.5 ml-[3px] grid w-[250px]">
          <select aria-label="消息过滤" class="col-start-1 row-start-1 h-[22px] appearance-none border border-[#888] bg-white pl-[5px] text-base/5"><option>显示所有消息</option></select>
          <span class="pointer-events-none col-start-1 row-start-1 grid h-[22px] w-[21px] place-items-center justify-self-end border border-[#888] bg-linear-to-b from-[#ececec] to-[#c8c8c8]"><svg class="h-1.5 w-2.5" viewBox="0 0 10 6"><path d="M0 0h10L5 6z"/></svg></span>
        </div>
      </div>
      <div class="flex h-[21px] justify-end bg-[#efefef] pr-3.5"><span class="-mt-1.5 font-['Liberation_Sans',sans-serif] text-[15px]/5 text-[#8c8c8c] text-shadow-[1px_1px_0_#ffffff]">CSDN @Clockwisee</span></div>
    </section>
  </main>
</div>

<script>
// Project tree: [level, icon, label, expandable, shaded, bold]
const nodes = [
  [2,'proginfo','程序信息',0,0,0],[2,'doc','<span class="text-sm/5">PLC</span> 报警文本列表',0,0,0],[2,'fmod','本地模块',1,0,0],
  [1,'fnet','未分组的设备',1,1,1],[1,'fsec','安全设置',1,1,0],[1,'fx','跨设备功能',1,1,0],[1,'fdata','公共数据',1,1,0],
  [1,'fdoc','文档设置',1,1,0],[1,'flang','语言和资源',1,1,0],[1,'fver','版本控制接口',1,0,0],
  [0,'fonl','在线访问',1,1,0],[0,'fusb','读卡器<span class="text-sm/5">/USB</span> 存储器',1,1,0]
];
const indent = ['pl-[9px]', 'pl-[31px]', 'pl-[53px]'];
let html = '';
for (let i = 0; i < 23; i++) {
  const n = nodes[i];
  const shade = n && n[4] ? 'bg-[#e0e0e0]' : 'bg-[#efefef]';
  html += `<li class="flex h-6 border-b border-[#fcfcfc] nth-[5n]:h-[23px] ${shade}"><div class="flex min-w-0 flex-1 items-center border-r border-[#c4c4c4] ${n ? indent[n[0]] : ''}">`;
  if (n) html += `<svg class="h-2.5 w-1.5 shrink-0" viewBox="0 0 6 10">${n[3] ? '<path d="M0 0l6 5-6 5z"/>' : ''}</svg><svg class="mr-[5px] ml-[9px] size-5 shrink-0"><use href="#${n[1]}"/></svg><span class="leading-5 ${n[5] ? 'text-base font-bold' : ''}">${n[2]}</span>`;
  html += '</div><div class="w-[25px] border-l border-white"></div></li>';
}
document.getElementById('tree').innerHTML = html;

// Details rows
document.getElementById('details').innerHTML = ['Local','Local~AI_2_1','Local~Common','Local~Configuration'].map((t, i) =>
  `<tr class="h-6 border-b border-white ${i ? 'bg-[#efefef]' : 'bg-[#d0d6dc]'}"><td class="bg-[#d8d8d8] p-0"><svg class="mt-0.5 h-[18px] w-5 opacity-80"><use href="#sysconst"/></svg></td><td class="p-0 pb-0.5 pl-[29px] leading-5 ${i ? '' : 'outline-1 -outline-offset-1 outline-dotted outline-[#777]'}">${t}</td><td class="p-0 pb-0.5 pl-[6px] leading-5">Hw_SubM...</td></tr>`).join('');

// Variable table
const rows = [['开','%M0.0'],['关','%M0.1'],['系统运行','%M0.2'],['1喷枪_1','%M0.3'],['1喷枪_2','%M1.3'],['1喷枪_总','%M1.4'],['2喷枪_1','%M0.4'],['2喷枪_2','%M1.1'],['2喷枪_总','%M1.2'],['3喷枪_1','%M0.5'],['3喷枪_2','%M0.6'],['3喷枪_总','%M0.7'],['时间','%ID20'],['&lt;新增&gt;','']];
const box = (label, state) => {
  const look = state === 'on' ? '<rect x=".75" y=".75" width="16.500" height="16.500" rx="2" fill="url(#gChk)" stroke="#5b6a80" stroke-width="1.500"/><path d="M2 2h14" stroke="#2a50b0" stroke-width="1.500"/><path d="M4 7.500l4 4.500 6.500-6.500" fill="none" stroke="#0a3f94" stroke-width="3.300"/>'
    : state === 'grey' ? '<rect x=".75" y=".75" width="16.500" height="16.500" rx="2" fill="#f6f6f6" stroke="#777" stroke-width="1.300"/><path d="M4 7.500l4 4.500 6.500-6.500" fill="none" stroke="#5f5f5f" stroke-width="2.800"/>'
    : '<rect x=".75" y=".75" width="16.500" height="16.500" rx="2" fill="url(#gOff)" stroke="#c0c0c0" stroke-width="1.300"/>';
  return `<label class="grid size-[18px] ${state === 'off' ? 'ml-[11px]' : 'ml-[22px]'}"><input type="checkbox" aria-label="${label}" ${state === 'off' ? '' : 'checked'} class="col-start-1 row-start-1 size-[18px] appearance-none"><svg class="pointer-events-none col-start-1 row-start-1 size-[18px]" viewBox="0 0 18 18">${look}</svg></label>`;
};
let body = '';
for (let i = 0; i < 27; i++) {
  const r = rows[i], sel = i === 12, last = i === 13;
  const h = i % 5 === 4 ? 'h-[23px]' : 'h-6';
  const line = sel ? 'border-b border-b-[#3b70d8]' : i === 11 ? 'border-b-2 border-b-[#6c94e0]' : 'border-b border-b-[#fcfcfc]';
  const bg = sel ? 'bg-[#bfcde8]' : 'bg-[#efefef]';
  const mark = r && last ? 'bg-[#e0e0e0]' : bg;
  const base = `${line} border-r border-r-[#fafafa] p-0 leading-5`;
  const hmi = n => `<td class="${base} ${mark}">${r ? box(n, last ? 'grey' : 'on') : ''}</td>`;
  body += `<tr class="${h}">
    <th scope="row" class="border-r border-b border-r-[#b8b8b8] border-b-[#fcfcfc] p-0 pl-1.5 text-left leading-5 font-normal text-[#858585] ${sel ? 'bg-[#c3cdd8]' : 'bg-[#cacaca]'}">${r ? i + 1 : ''}</th>
    <td class="relative ${base} ${r && !last ? 'bg-[#e0e0e0]' : 'bg-[#efefef]'}">${r && !last ? '<svg class="ml-px h-3.5 w-5"><use href="#tag"/></svg>' : ''}${sel ? '<i class="absolute -bottom-0.5 left-0 z-10 size-1.5 border-t border-r border-white bg-[#3b70d8]"></i>' : ''}</td>
    <td class="${line} border-r border-r-[#d0d0d0] p-0 pl-7 text-[15px] leading-5 ${bg} ${last ? 'text-[#777]' : ''}">${r ? r[0] : ''}</td>
    <td class="${base} ${bg} pl-[5px]"><div class="flex items-center justify-between">${r && !last ? (sel ? 'Time' : 'Bool') : ''}${sel ? '<button type="button" aria-label="选择数据类型" class="mr-px grid h-[21px] w-5 place-items-center border border-[#888] bg-[#f0f0f0]"><svg class="h-4 w-3" viewBox="0 0 12 16"><path d="M.5.5h11v15H.5z" fill="#e8edff" stroke="#8090e0"/><path d="M3 4h2M6 4h4M3 7h2M6 7h4M3 10h2M6 10h4M3 13h2M6 13h4" stroke="#1c2470" stroke-width="1.300"/></svg></button>' : ''}</div></td>
    <td class="${base} ${bg} pl-[5px]"><div class="flex items-center justify-between">${r ? r[1] : ''}${sel ? '<button type="button" aria-label="选择地址" class="grid h-[21px] w-[22px] place-items-center border border-[#888] bg-linear-to-b from-[#f4f4f4] to-[#c4c4c4]"><svg class="h-1.5 w-2.5" viewBox="0 0 10 6"><path d="M0 0h10L5 6z"/></svg></button>' : ''}</div></td>
    <td class="${base} ${sel ? 'bg-[#b2bfdc]' : r ? 'bg-[#e0e0e0]' : bg}">${r ? box('保持', 'off') : ''}</td>
    ${hmi('从 HMI 可访问')}${hmi('从 HMI 可写')}${hmi('在 HMI 可见')}
    <td class="${base} ${bg}"></td>
    <td class="border-b border-[#fcfcfc] bg-[#efefef] p-0"></td></tr>`;
}
document.getElementById('vars').innerHTML = body;
</script>
</body>
</html>
